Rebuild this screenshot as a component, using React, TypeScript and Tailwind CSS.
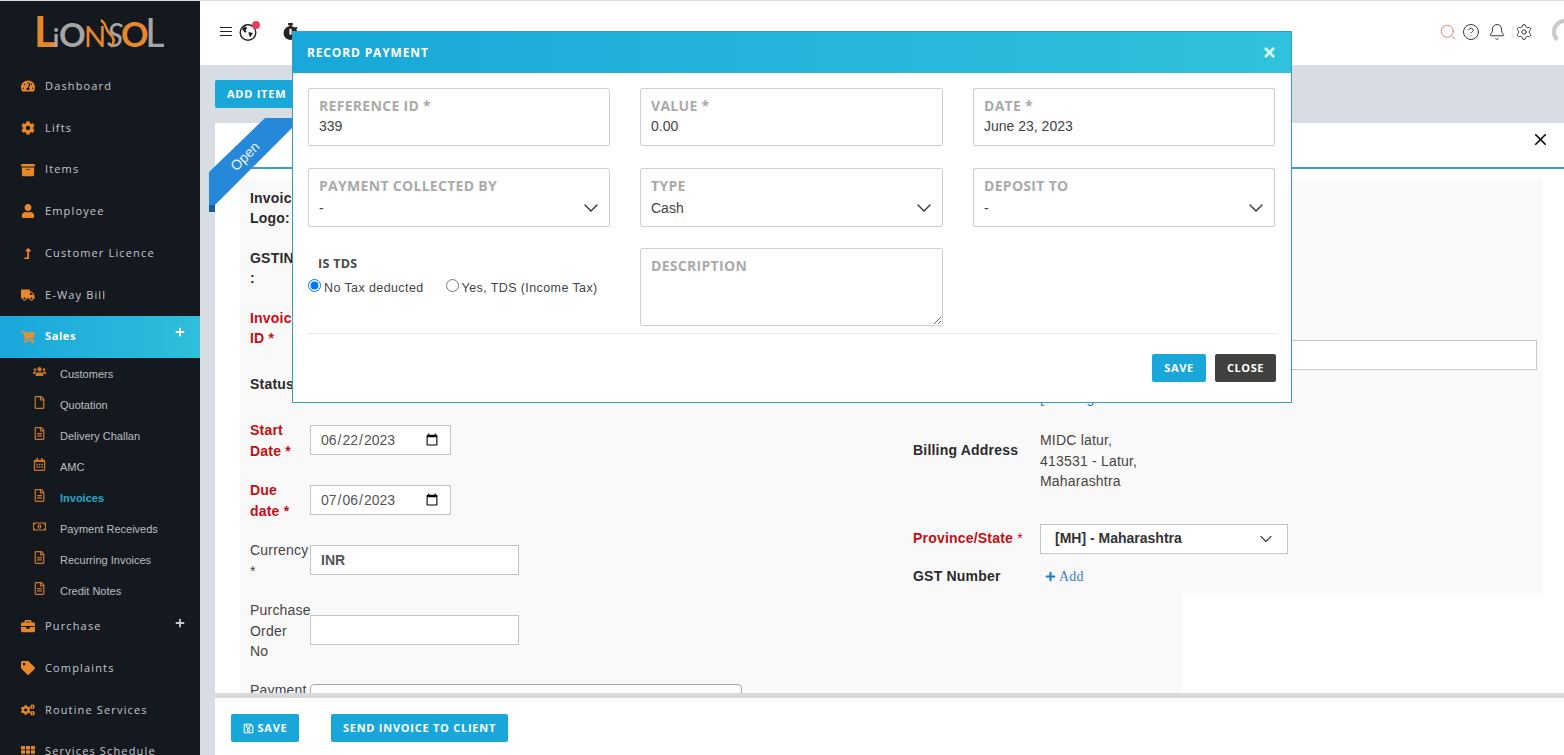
import type { ReactNode } from "react";
import { Bell, ChevronDown, CircleHelp, Search, Settings, X } from "lucide-react";
import {
  FaArchive,
  FaBriefcase,
  FaCog,
  FaCogs,
  FaPlus,
  FaRegCalendarAlt,
  FaRegFile,
  FaRegFileAlt,
  FaRegMoneyBillAlt,
  FaRegSave,
  FaShoppingCart,
  FaStopwatch,
  FaTachometerAlt,
  FaTag,
  FaTh,
  FaTimes,
  FaTruck,
  FaUser,
  FaUsers,
  FaLevelUpAlt,
} from "react-icons/fa";

const sans = "font-['Liberation_Sans',Arial,sans-serif]";
const open = "font-['Open_Sans',sans-serif]";

function Logo() {
  return (
    <svg width="130" height="50" viewBox="0 0 130 50">
      <g fontFamily="Lato, sans-serif">
        <text x="0" y="39" fontSize="42" fontWeight="700" fill="#e8872a">L</text>
        <text x="19" y="39" fontSize="24" fontWeight="700" fill="#a5a5a5">i</text>
        <text x="25" y="39" fontSize="33" fontWeight="700" fill="#a5a5a5">O</text>
        <text x="50" y="39" fontSize="29" fill="#e8872a">N</text>
        <text x="73" y="39" fontSize="32" fontStyle="italic" fill="#a5a5a5">S</text>
        <text x="87" y="39" fontSize="34" fontWeight="700" fill="#e8872a">O</text>
        <text x="111" y="39" fontSize="40" fill="#a5a5a5">L</text>
      </g>
      <path d="M67 12c6 4 4 10 9 14s5 8 1 13" fill="none" stroke="#e8872a" strokeWidth="2.5" />
    </svg>
  );
}

function MainItem({ icon, label, plus }: { icon: ReactNode; label: string; plus?: boolean }) {
  return (
    <div className="relative flex h-[41.75px] items-center pl-[20px] shrink-0">
      <span className="flex w-[15px] justify-center text-[14px] text-[#e8872a]">{icon}</span>
      <span className={`ml-[10px] ${open} text-[11px] tracking-[1.15px] text-[#c4c7ca]`}>{label}</span>
      {plus && <FaPlus className="absolute right-[15px] top-[12px] text-[10px] text-[#c4c7ca]" />}
    </div>
  );
}

function SubItem({ icon, label, active }: { icon: ReactNode; label: string; active?: boolean }) {
  return (
    <div className="flex h-[31px] items-center pl-[32px] pt-[2px] shrink-0">
      <span className="-mt-[6px] flex w-[14px] justify-center text-[13px] text-[#c9772c]">{icon}</span>
      <span
        className={`ml-[14px] ${sans} text-[11px] ${active ? "font-bold text-[#2aa5c9]" : "text-[#bcbec0]"}`}
      >
        {label}
      </span>
    </div>
  );
}

function Sidebar() {
  return (
    <aside className="flex h-full w-[200px] shrink-0 flex-col overflow-hidden bg-[#14191f]">
      <div className="flex h-[64.25px] shrink-0 items-center justify-center pr-[2px]">
        <Logo />
      </div>
      <MainItem icon={<FaTachometerAlt />} label="Dashboard" />
      <MainItem icon={<FaCog />} label="Lifts" />
      <MainItem icon={<FaArchive />} label="Items" />
      <MainItem icon={<FaUser />} label="Employee" />
      <MainItem icon={<FaLevelUpAlt className="text-[11px]" />} label="Customer Licence" />
      <MainItem icon={<FaTruck />} label="E-Way Bill" />
      <div className="relative flex h-[41.75px] shrink-0 items-center bg-gradient-to-r from-[#19a7dc] to-[#2fbfdb] pl-[20px]">
        <span className="flex w-[15px] justify-center text-[14px] text-[#d9943f]">
          <FaShoppingCart />
        </span>
        <span className={`ml-[10px] ${open} text-[11px] font-bold tracking-[0.6px] text-white`}>Sales</span>
        <FaPlus className="absolute right-[15px] top-[11px] text-[10px] text-white" />
      </div>
      <SubItem icon={<FaUsers />} label="Customers" />
      <SubItem icon={<FaRegFile />} label="Quotation" />
      <SubItem icon={<FaRegFileAlt />} label="Delivery Challan" />
      <SubItem icon={<FaRegCalendarAlt />} label="AMC" />
      <SubItem icon={<FaRegFileAlt />} label="Invoices" active />
      <SubItem icon={<FaRegMoneyBillAlt />} label="Payment Receiveds" />
      <SubItem icon={<FaRegFileAlt />} label="Recurring Invoices" />
      <SubItem icon={<FaRegFileAlt />} label="Credit Notes" />
      <MainItem icon={<FaBriefcase />} label="Purchase" plus />
      <MainItem icon={<FaTag />} label="Complaints" />
      <MainItem icon={<FaCogs />} label="Routine Services" />
      <MainItem icon={<FaTh />} label="Services Schedule" />
    </aside>
  );
}

function Topbar() {
  return (
    <header className="flex h-[64px] shrink-0 items-center bg-white pl-[20px] pr-0 pb-[3px]">
      <div className="flex w-[12px] flex-col gap-[3px]">
        <span className="h-[1px] bg-[#222]" />
        <span className="h-[1px] bg-[#222]" />
        <span className="h-[1px] bg-[#222]" />
      </div>
      <div className="relative ml-[6px] h-[20px] w-[20px]">
        <svg width="20" height="20" viewBox="0 0 20 20">
          <circle cx="10" cy="10.5" r="7.8" fill="none" stroke="#222" strokeWidth="1.4" />
          <path d="M4 7l3-3 2 2-1.500 2.500 1.500 1.500-2.500 0.500zM10.500 10l4.500 1-2.500 4-1.500-1.500z" fill="#222" />
        </svg>
        <span className="absolute -top-[1px] right-[-2px] h-[8px] w-[8px] rounded-full bg-[#e8405a]" />
      </div>
      <FaStopwatch className="ml-[24px] text-[17px] text-[#222]" />
      <div className="ml-auto flex items-center">
        <Search size={18} strokeWidth={1.2} className="text-[#e2775a]" />
        <CircleHelp size={18} strokeWidth={1.2} className="ml-[5px] text-[#222]" />
        <Bell size={18} strokeWidth={1.2} className="ml-[8px] text-[#222]" />
        <Settings size={18} strokeWidth={1.2} className="ml-[9px] text-[#222]" />
        <div className="ml-[19px] mr-[-14px] h-[26px] w-[26px] shrink-0 rounded-full border-[4px] border-[#c9c9c9] border-b-transparent" />
      </div>
    </header>
  );
}

function Row({ className, label, red, bold, children }: {
  className: string;
  label: ReactNode;
  red?: boolean;
  bold?: boolean;
  children?: ReactNode;
}) {
  return (
    <div className={`flex items-start ${className}`}>
      <div
        className={`w-[70px] shrink-0 pl-[10px] pr-[10px] text-[14px] leading-[20.5px] tracking-[0.2px] ${
          red ? "font-bold text-[#c40f14]" : bold ? "font-bold text-[#2a2a2a]" : "text-[#444]"
        }`}
      >
        {label}
      </div>
      {children}
    </div>
  );
}

function InvoiceForm() {
  const field = "h-[30px] border border-[#c4c4c4] bg-white text-[14px] text-[#555] outline-none";
  const noop = () => {};
  return (
    <div className={`flex h-full ${sans}`}>
      <div className="h-full w-[673px] shrink-0 overflow-hidden bg-[#faf9fa] pt-[8.5px]">
        <Row className="" label="Invoice Logo:" bold />
        <Row className="mt-[19px]" label="GSTIN :" bold />
        <Row className="mt-[19px]" label="Invoice ID *" red />
        <Row className="mt-[25px]" label="Status" bold />
        <Row className="mt-[26px]" label="Start Date *" red>
          <input type="date" onChange={noop} value="2023-06-22" className={`${field} mt-[5px] w-[141px] px-[9px]`} />
        </Row>
        <Row className="mt-[19px]" label="Due date *" red>
          <input type="date" onChange={noop} value="2023-07-06" className={`${field} mt-[5px] w-[141px] px-[9px]`} />
        </Row>
        <Row className="mt-[19px]" label="Currency *">
          <input readOnly value="INR" className={`${field} mt-[5px] w-[209px] px-[10px] font-bold`} />
        </Row>
        <Row className="mt-[19px]" label="Purchase Order No">
          <input readOnly value="" className={`${field} mt-[15px] w-[209px] px-[10px]`} />
        </Row>
        <Row className="mt-[18px]" label="Payment">
          <div className="mt-[4px] h-[40px] w-[432px] shrink-0 rounded-[4px] border border-[#a8a8a8] bg-white" />
        </Row>
      </div>
      <div className="flex h-full w-[630px] shrink-0 flex-col">
        <div className="h-[414px] shrink-0 bg-[#faf9fa] pt-[161px] text-[14px] tracking-[0.2px]">
          <div className="ml-[127px] h-[30px] w-[497px] border border-[#c4c4c4] bg-white" />
          <div className="ml-[127px] mt-[18px] h-[20px] leading-[20px] text-[#1a7fbf]">[&nbsp;&nbsp;Change</div>
          <div className="mt-[22px] flex items-start">
            <div className="mt-[10px] w-[127px] font-bold leading-[20px] text-[#2a2a2a]">Billing Address</div>
            <div className="leading-[20.5px] text-[#444]">
              MIDC latur,
              <br />
              413531 - Latur,
              <br />
              Maharashtra
            </div>
          </div>
          <div className="mt-[32px] flex items-center">
            <div className="w-[127px] font-bold text-[#c40f14]">
              Province/State <span className="font-normal">*</span>
            </div>
            <div className="flex h-[30px] w-[248px] items-center justify-between border border-[#c4c4c4] bg-white pl-[14px] pr-[11px] font-bold tracking-normal text-[#333]">
              [MH] - Maharashtra
              <ChevronDown size={20} strokeWidth={1.4} className="text-[#444]" />
            </div>
          </div>
          <div className="mt-[13px] flex h-[20px] items-center">
            <div className="w-[127px] font-bold text-[#2a2a2a]">GST Number</div>
            <FaPlus className="ml-[5px] text-[11px] text-[#1f78c8]" />
            <span className="ml-[3px] font-['Liberation_Serif',serif] text-[14px] text-[#3a7fc4]">Add</span>
          </div>
        </div>
        <div className="w-[269px] flex-1 bg-[#faf9fa]" />
      </div>
    </div>
  );
}

function ModalField({ label, value, select, className }: {
  label: string;
  value: string;
  select?: boolean;
  className: string;
}) {
  return (
    <div className={`relative rounded-[2px] border border-[#cfcfcf] pl-[10px] ${className}`}>
      <div className={`${open} text-[14px] font-bold leading-[20px] tracking-[0.3px] text-[#aaa]`}>{label}</div>
      <div className={`${sans} ${select ? "mt-[2px]" : "mt-0"} text-[14px] leading-[20px] text-[#444]`}>{value}</div>
      {select && (
        <ChevronDown size={24} strokeWidth={1.4} className="absolute right-[6px] top-[27px] text-[#333]" />
      )}
    </div>
  );
}

function RecordPaymentModal() {
  return (
    <div className="absolute left-[292px] top-[30px] z-20 flex h-[372px] w-[1000px] flex-col border border-[#3c9db8] bg-white">
      <div className="flex h-[41px] shrink-0 items-center justify-between bg-gradient-to-r from-[#19a7d9] to-[#30c1dc] pl-[14px] pr-[14px]">
        <span className={`${open} text-[12px] font-bold tracking-[0.85px] text-white`}>RECORD PAYMENT</span>
        <FaTimes className="text-[15px] text-[#d8f6fb]" />
      </div>
      <div className="grid grid-cols-[302px_303px_302px] grid-rows-[58px_58px_78px] gap-x-[30px] gap-y-[22px] pl-[15px] pt-[15px]">
        <ModalField className="h-[58px] pt-[7px]" label="REFERENCE ID *" value="339" />
        <ModalField className="h-[58px] pt-[7px]" label="VALUE *" value="0.00" />
        <ModalField className="h-[58px] pt-[7px]" label="DATE *" value="June 23, 2023" />
        <ModalField className="h-[59px] pt-[7px]" label="PAYMENT COLLECTED BY" value="-" select />
        <ModalField className="h-[59px] pt-[7px]" label="TYPE" value="Cash" select />
        <ModalField className="h-[59px] pt-[7px]" label="DEPOSIT TO" value="-" select />
        <div className="pt-[7px]">
          <div className={`${open} pl-[10px] text-[12.5px] font-bold tracking-[0.3px] text-[#4a4a4a]`}>IS TDS</div>
          <div className={`${sans} mt-[5px] flex items-center text-[12.5px] tracking-[0.4px] text-[#444]`}>
            <input type="radio" readOnly checked className="m-0 h-[13px] w-[13px] -translate-y-[3px]" />
            <span className="ml-[3px]">No Tax deducted</span>
            <input type="radio" readOnly checked={false} className="m-0 ml-[22px] h-[13px] w-[13px] -translate-y-[3px]" />
            <span className="ml-[3px]">Yes, TDS (Income Tax)</span>
          </div>
        </div>
        <div className="relative h-[78px]">
          <textarea
            readOnly
            className="block h-[78px] w-full resize-y rounded-[2px] border border-[#cfcfcf] outline-none"
          />
          <span className={`absolute left-[11px] top-[8px] ${open} text-[14px] font-bold leading-[20px] tracking-[0.3px] text-[#aaa]`}>
            DESCRIPTION
          </span>
        </div>
      </div>
      <div className="ml-[15px] mt-[7px] w-[969px] border-t border-[#e8e8e8]" />
      <div className={`mt-[20px] flex justify-end gap-[9px] pr-[15px] ${open} text-[11px] font-bold tracking-[0.6px] text-white`}>
        <button className="h-[28px] w-[54px] rounded-[2px] bg-[#19a7d9]">SAVE</button>
        <button className="h-[28px] w-[61px] rounded-[2px] bg-[#404040]">CLOSE</button>
      </div>
    </div>
  );
}

export default function App() {
  const actionBtn = `h-[28px] rounded-[2px] bg-[#19a7d9] ${open} text-[11px] font-bold tracking-[0.75px] text-white`;
  return (
    <div className="relative h-[755px] w-full overflow-hidden border-t border-[#dcdcdc] bg-white">
      <div className="flex h-full">
        <Sidebar />
        <main className="flex h-full min-w-0 flex-1 flex-col">
          <Topbar />
          <div className="flex min-h-0 flex-1 flex-col bg-[#d8dde3] pl-[15px]">
            <button className={`${actionBtn} mt-[15px] w-[90px] shrink-0 pl-[12px] text-left`}>ADD ITEM</button>
            <section className="relative mt-[15px] flex min-h-0 flex-1 flex-col bg-white">
              <svg width="90" height="100" viewBox="0 0 90 100" className="absolute -left-[6px] -top-[5px] z-10">
                <polygon points="56,0 90,0 90,3 6,87 0,87 0,54" fill="#2688d8" />
                <polygon points="0,87 6,87 6,94 0,94" fill="#1b5f97" />
              </svg>
              <span className={`absolute left-[13px] top-[23px] z-10 -rotate-45 ${sans} text-[14px] text-[#e8f3fc]`}>
                Open
              </span>
              <div className="flex h-[44px] shrink-0 items-center justify-end pb-[12px] pr-[14px]">
                <X size={19} strokeWidth={2} className="text-black" />
              </div>
              <div className="h-[2px] shrink-0 bg-[#3aa0b5]" />
              <div className="min-h-0 flex-1 overflow-hidden pl-[25px] pt-[10px]">
                <InvoiceForm />
              </div>
              <footer className="flex h-[62px] shrink-0 gap-[32px] border-t-[5px] border-[#d9d9d9] bg-white pl-[16px] pt-[16px]">
                <button className={`${actionBtn} flex w-[68px] items-center justify-center gap-[4px]`}>
                  <FaRegSave className="text-[11px]" /> SAVE
                </button>
                <button className={`${actionBtn} w-[177px]`}>SEND INVOICE TO CLIENT</button>
              </footer>
            </section>
          </div>
        </main>
      </div>
      <RecordPaymentModal />
    </div>
  );
}
